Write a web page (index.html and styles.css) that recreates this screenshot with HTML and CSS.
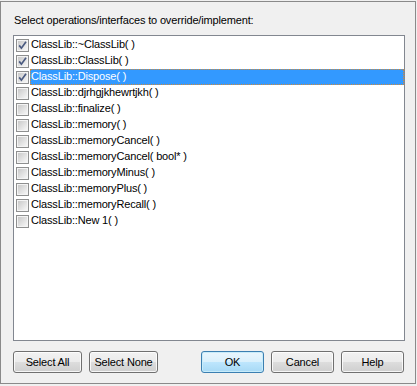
FILE: index.html
```html
<!DOCTYPE html>
<html>
<head>
<meta charset="utf-8">
<link rel="stylesheet" href="styles.css">
</head>
<body>
<svg width="0" height="0" class="defs">
  <defs>
    <linearGradient id="cbfill" x1="0" y1="0" x2="1" y2="1">
      <stop offset="0" stop-color="#c9c9c9"/>
      <stop offset="1" stop-color="#f6f6f6"/>
    </linearGradient>
    <symbol id="cb" viewBox="0 0 13 13">
      <rect x="0.5" y="0.5" width="12" height="12" fill="#f4f4f4" stroke="#8e8f8f"/>
      <rect x="2" y="2" width="9" height="9" fill="url(#cbfill)"/>
    </symbol>
    <symbol id="cbc" viewBox="0 0 13 13">
      <rect x="0.5" y="0.5" width="12" height="12" fill="#f4f4f4" stroke="#8e8f8f"/>
      <rect x="2" y="2" width="9" height="9" fill="url(#cbfill)"/>
      <path d="M3.2 6.4 L5.4 9.2 L10 2.8" fill="none" stroke="#4a5a80" stroke-width="1.7"/>
    </symbol>
  </defs>
</svg>
<div class="dialog">
  <div class="label">Select operations/interfaces to override/implement:</div>
  <div class="list">
    <div class="row"><svg class="cb"><use href="#cbc"/></svg><span class="text">ClassLib::~ClassLib( )</span></div>
    <div class="row"><svg class="cb"><use href="#cbc"/></svg><span class="text">ClassLib::ClassLib( )</span></div>
    <div class="row"><svg class="cb"><use href="#cbc"/></svg><span class="text sel">ClassLib::Dispose( )</span></div>
    <div class="row"><svg class="cb"><use href="#cb"/></svg><span class="text">ClassLib::djrhgjkhewrtjkh( )</span></div>
    <div class="row"><svg class="cb"><use href="#cb"/></svg><span class="text">ClassLib::finalize( )</span></div>
    <div class="row"><svg class="cb"><use href="#cb"/></svg><span class="text">ClassLib::memory( )</span></div>
    <div class="row"><svg class="cb"><use href="#cb"/></svg><span class="text">ClassLib::memoryCancel( )</span></div>
    <div class="row"><svg class="cb"><use href="#cb"/></svg><span class="text">ClassLib::memoryCancel( bool* )</span></div>
    <div class="row"><svg class="cb"><use href="#cb"/></svg><span class="text">ClassLib::memoryMinus( )</span></div>
    <div class="row"><svg class="cb"><use href="#cb"/></svg><span class="text">ClassLib::memoryPlus( )</span></div>
    <div class="row"><svg class="cb"><use href="#cb"/></svg><span class="text">ClassLib::memoryRecall( )</span></div>
    <div class="row"><svg class="cb"><use href="#cb"/></svg><span class="text">ClassLib::New 1( )</span></div>
  </div>
  <div class="buttons">
    <button class="btn">Select All</button>
    <button class="btn">Select None</button>
    <div class="spacer"></div>
    <button class="btn small default">OK</button>
    <button class="btn small">Cancel</button>
    <button class="btn small">Help</button>
  </div>
</div>
</body>
</html>
```
FILE: styles.css
```css
html, body {
  margin: 0;
  padding: 0;
  background: #f0f0f0;
}
body {
  width: 417px;
  height: 386px;
  font-family: "Liberation Sans", Arial, sans-serif;
  font-size: 11px;
  letter-spacing: -0.16px;
  color: #000;
}
.defs {
  position: absolute;
  width: 0;
  height: 0;
}
.dialog {
  margin-top: 1px;
  width: 416px;
  height: 383px;
  box-sizing: border-box;
  border: 1px solid #8a8a8a;
  padding: 12px 0 0 12px;
  display: flex;
  flex-direction: column;
}
.label {
  line-height: 13px;
  height: 13px;
  margin-left: 1px;
}
.list {
  margin-top: 8px;
  width: 392px;
  height: 306px;
  box-sizing: border-box;
  border: 1px solid #828790;
  background: #fff;
  padding: 1px 0 0 2px;
}
.row {
  display: flex;
  align-items: center;
  height: 16px;
}
.cb {
  width: 13px;
  height: 13px;
  flex: none;
}
.text {
  flex: 1;
  height: 16px;
  line-height: 15px;
  margin-left: 1px;
  padding-left: 1px;
  box-sizing: border-box;
  white-space: pre;
}
.sel {
  background: #3399ff;
  color: #fff;
  border: 1px dotted #d08a3a;
  line-height: 13px;
  padding-left: 0;
}
.buttons {
  display: flex;
  margin-top: 10px;
  height: 22px;
  gap: 7px;
  padding-right: 11px;
}
.spacer {
  flex: 1;
}
.btn {
  width: 69px;
  height: 22px;
  box-sizing: border-box;
  font-family: "Liberation Sans", Arial, sans-serif;
  font-size: 11px;
  letter-spacing: -0.16px;
  color: #000;
  border: 1px solid #707070;
  border-radius: 3px;
  background: linear-gradient(to bottom, #f2f2f2 0%, #ebebeb 50%, #dddddd 50%, #cfcfcf 100%);
  box-shadow: inset 0 0 0 1px rgba(255,255,255,0.8);
  padding: 0;
  margin: 0;
}
.small {
  width: 63px;
}
.default {
  border-color: #3c7fb1;
  background: linear-gradient(to bottom, #eaf6fd 0%, #d9f0fc 50%, #bee6fd 50%, #a7d9f5 100%);
  box-shadow: inset 0 0 0 1px #c8ecfa;
}
```
